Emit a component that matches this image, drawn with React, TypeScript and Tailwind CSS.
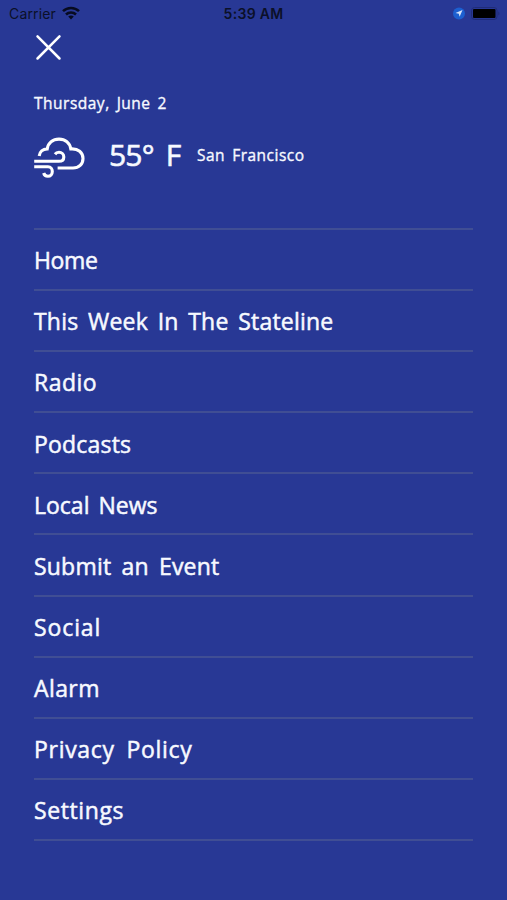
import { clsx } from 'clsx';

const menuItems = [
  { label: 'Home', spacing: 'tracking-[-0.4px]' },
  { label: 'This Week In The Stateline', spacing: 'tracking-[0.2px] [word-spacing:3.5px]' },
  { label: 'Radio', spacing: 'tracking-[0.5px]' },
  { label: 'Podcasts', spacing: 'tracking-[0.2px]' },
  { label: 'Local News', spacing: 'tracking-[0px] [word-spacing:3px]' },
  { label: 'Submit an Event', spacing: 'tracking-[0.2px] [word-spacing:4px]' },
  { label: 'Social', spacing: 'tracking-[0.9px]' },
  { label: 'Alarm', spacing: 'tracking-[0.4px]' },
  { label: 'Privacy Policy', spacing: 'tracking-[0.7px] [word-spacing:5px]' },
  { label: 'Settings', spacing: 'tracking-[0.6px]' },
];

const WifiIcon = () => (
  <svg width="18" height="14" viewBox="0 0 18 14" className="ml-[6px] -mt-[2px]" fill="none" stroke="#070b20" strokeWidth="2.5">
    <path d="M1 5.2C5.5 0.8 12.5 0.8 17 5.2" />
    <path d="M4 8.5C6.8 5.7 11.2 5.7 14 8.5" />
    <path d="M9 13.4L6.2 10.6C7.8 9.2 10.2 9.2 11.8 10.6Z" fill="#070b20" stroke="none" />
  </svg>
);

const LocationIcon = () => (
  <svg width="13" height="13" viewBox="0 0 13 13">
    <circle cx="6" cy="6.5" r="6" fill="#1c5fd0" />
    <path d="M9.5 3L6.6 9.8L5.8 6.7L2.5 6.1Z" fill="#d5e2fa" />
  </svg>
);

const BatteryIcon = () => (
  <svg width="29" height="13" viewBox="0 0 29 13" className="ml-[5px]">
    <rect x="0.5" y="0.5" width="25.5" height="12" rx="3" fill="none" stroke="#202c78" />
    <rect x="2" y="2" width="22.5" height="9" rx="1" fill="#000" />
    <path d="M27.4 4.4C28.8 5.2 28.8 7.8 27.4 8.6Z" fill="#202c78" />
  </svg>
);

const WindyCloud = () => (
  <svg width="52" height="44" viewBox="0 0 52 44" fill="none" stroke="#fff" strokeWidth="3.1">
    <path d="M5.2 20C5.6 15.8 8.8 13 13.2 12.9C14.2 6.8 18.8 3.1 25 3.1C31.2 3.1 35.8 6.8 36.8 12.9C44.2 12.3 49 16.6 49 22.4C49 28.2 44.8 32 39 32H23.6" />
    <path d="M0.2 25.3H24.8C28.2 25.3 29.8 23.4 29.8 20.9C29.8 18.2 27.7 16.3 25 16.3C23.3 16.3 21.9 17 21 18.2" />
    <path d="M0.2 30.8H14C16.8 30.8 18.3 32.9 18.3 35.4C18.3 38.2 16.5 40.2 13.9 40.2C11.8 40.2 10.2 39 9.7 37" />
  </svg>
);

const StatusBar = () => (
  <div className="grid grid-cols-3 h-[28px] items-center font-['Inter'] text-[14px] text-[#0b1028]">
    <div className="flex items-center pl-[9px]">
      <span className="-mt-[2px] tracking-[0.15px]">Carrier</span>
      <WifiIcon />
    </div>
    <span className="-mt-[2px] text-center font-semibold text-[14px] tracking-[0.3px]">5:39 AM</span>
    <div className="flex items-center justify-end pr-[7px] -mt-[1px]">
      <LocationIcon />
      <BatteryIcon />
    </div>
  </div>
);

export default function App() {
  return (
    <div className="w-full h-[900px] overflow-hidden bg-[#283895] text-[#f7f9ff] font-['Open_Sans',sans-serif]">
      <StatusBar />
      <div className="px-[34px]">
        <button className="block mt-[6px] ml-[1px]" aria-label="Close">
          <svg width="27" height="27" viewBox="0 0 27 27" stroke="#fff" strokeWidth="2.5" strokeLinecap="round">
            <path d="M2.5 2.3L24.5 24.5M24.5 2.3L2.5 24.5" />
          </svg>
        </button>
        <p className="mt-[32px] h-[20px] leading-[20px] text-[15.5px] tracking-[0.5px] [word-spacing:2.5px] [-webkit-text-stroke:0.35px]">Thursday, June 2</p>
        <div className="flex items-center mt-[23px] h-[44px] whitespace-nowrap">
          <WindyCloud />
          <span className="ml-[23px] w-[88px] -mt-[6px] text-[30px] leading-[40px] tracking-[-0.8px] [word-spacing:5px] [-webkit-text-stroke:0.6px]">55° F</span>
          <span className="-mt-[7px] text-[15.5px] leading-[20px] tracking-[0.5px] [word-spacing:2.5px] [-webkit-text-stroke:0.35px]">San Francisco</span>
        </div>
        <nav className="mt-[48px] border-t-2 border-[#404e94]">
          {menuItems.map(({ label, spacing }) => (
            <a
              key={label}
              className={clsx(
                'flex items-center h-[61.1px] pt-[2px] border-b-2 border-[#404e94] text-[23px] whitespace-nowrap [-webkit-text-stroke:0.5px]',
                spacing
              )}
            >
              {label}
            </a>
          ))}
        </nav>
      </div>
    </div>
  );
}
